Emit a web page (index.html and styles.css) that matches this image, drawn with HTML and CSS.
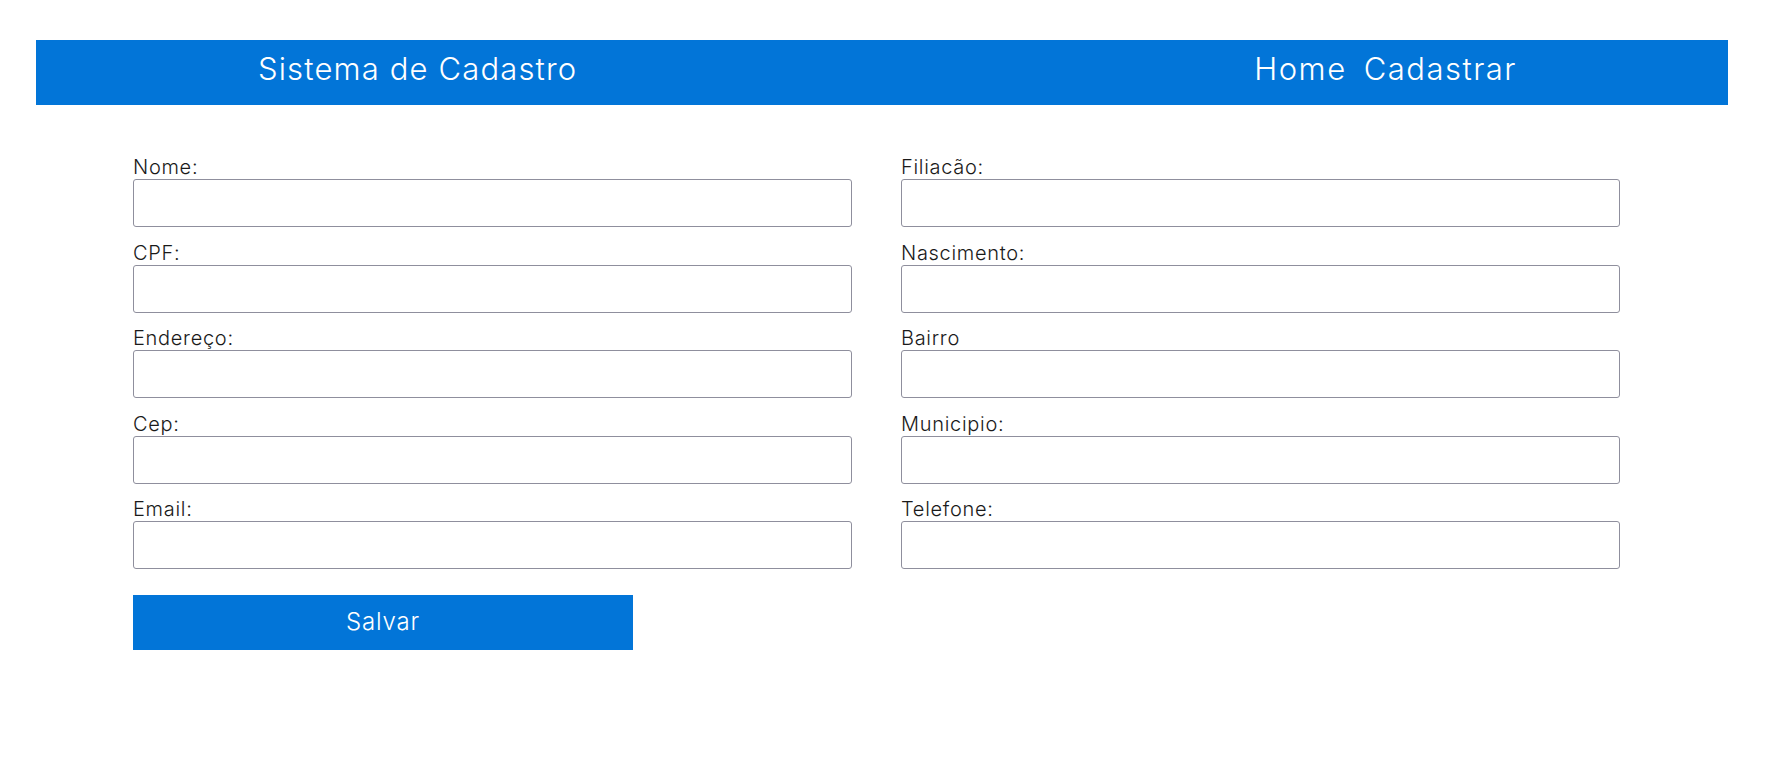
FILE: index.html
```html
<!DOCTYPE html>
<html lang="pt-BR">
<head>
<meta charset="utf-8">
<title>Sistema de Cadastro</title>
<link rel="stylesheet" href="styles.css">
</head>
<body>
<header class="topbar">
  <h1 class="brand">Sistema de Cadastro</h1>
  <nav class="menu">
    <a class="menu-link" href="#">Home</a>
    <a class="menu-link" href="#">Cadastrar</a>
  </nav>
</header>
<main class="content">
  <form class="form">
    <div class="columns">
      <div class="column">
        <div class="field"><label class="label" for="nome">Nome:</label><input class="input" id="nome" type="text"></div>
        <div class="field"><label class="label" for="cpf">CPF:</label><input class="input" id="cpf" type="text"></div>
        <div class="field"><label class="label" for="end">Endereço:</label><input class="input" id="end" type="text"></div>
        <div class="field"><label class="label" for="cep">Cep:</label><input class="input" id="cep" type="text"></div>
        <div class="field"><label class="label" for="email">Email:</label><input class="input" id="email" type="text"></div>
      </div>
      <div class="column">
        <div class="field"><label class="label" for="fil">Filiacão:</label><input class="input" id="fil" type="text"></div>
        <div class="field"><label class="label" for="nasc">Nascimento:</label><input class="input" id="nasc" type="text"></div>
        <div class="field"><label class="label" for="bairro">Bairro</label><input class="input" id="bairro" type="text"></div>
        <div class="field"><label class="label" for="mun">Municipio:</label><input class="input" id="mun" type="text"></div>
        <div class="field"><label class="label" for="tel">Telefone:</label><input class="input" id="tel" type="text"></div>
      </div>
    </div>
    <button class="save" type="button">Salvar</button>
  </form>
</main>
</body>
</html>
```
FILE: styles.css
```css
* { box-sizing: border-box; }

body {
  margin: 0;
  background: #fff;
  font-family: Inter, "Open Sans", "DejaVu Sans", sans-serif;
  font-weight: 300;
  color: #1a1a1a;
}

.topbar {
  margin: 40px 38px 0 36px;
  height: 65px;
  background: #0275d8;
  display: flex;
  align-items: center;
  justify-content: space-between;
  padding: 0 211px 8px 222px;
  color: #fff;
}

.brand {
  margin: 0;
  font-size: 31px;
  font-weight: 300;
  letter-spacing: 1.15px;
}

.menu {
  display: flex;
  gap: 17px;
}

.menu-link {
  color: #fff;
  text-decoration: none;
  font-size: 31px;
  font-weight: 300;
  letter-spacing: 1.5px;
}

.content {
  padding: 54px 0 0 133px;
}

.columns {
  display: flex;
  gap: 49px;
}

.column {
  width: 719px;
  display: flex;
  flex-direction: column;
}

.field {
  display: flex;
  flex-direction: column;
  margin-bottom: 17.5px;
}

.label {
  font-size: 20px;
  line-height: 16px;
  height: 20px;
  letter-spacing: 0.7px;
  color: #1a1a1a;
}

.input {
  height: 48px;
  width: 100%;
  border: 1px solid #8f8f9d;
  border-radius: 3px;
  background: #fff;
  font: inherit;
}

.save {
  margin-top: 8.5px;
  width: 500px;
  height: 55px;
  border: none;
  background: #0275d8;
  color: #fff;
  font-family: inherit;
  font-weight: 300;
  font-size: 24px;
  letter-spacing: 0.8px;
  padding: 0 0 2px;
}
```
